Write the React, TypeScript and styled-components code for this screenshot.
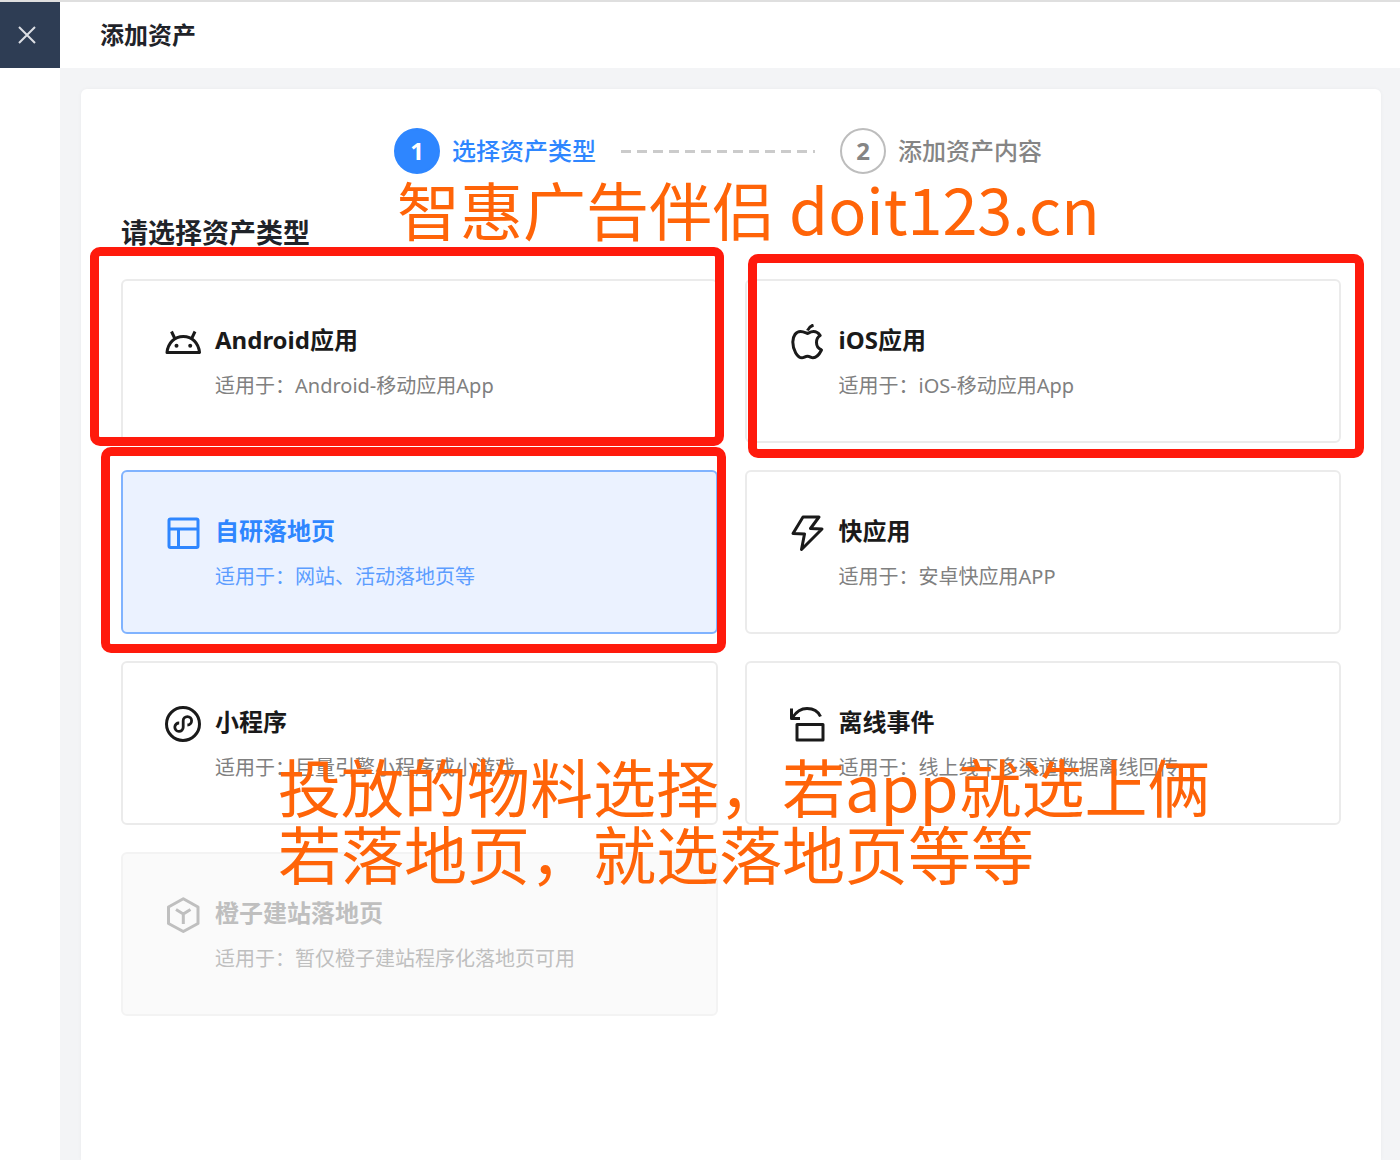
import React from "react";
import styled, { createGlobalStyle, css } from "styled-components";

const GlobalStyle = createGlobalStyle`
  * { box-sizing: border-box; }
  body {
    margin: 0;
    background: #f3f4f6;
    color: #1f2329;
    font-family: "Noto Sans", "Noto Sans CJK SC", sans-serif;
  }
  button { font: inherit; color: inherit; }
`;

const Page = styled.div`
  display: flex;
  min-height: 100vh;
  border-top: 2px solid #dfdfdf;
`;

const Rail = styled.aside`
  flex: none;
  width: 60px;
  background: #fff;
`;

const CloseButton = styled.button`
  display: flex;
  align-items: center;
  justify-content: center;
  width: 60px;
  height: 66px;
  padding: 0 6px 0 0;
  border: 0;
  background: #2e3d54;
  color: #dcdfe4;
`;

const Main = styled.main`
  flex: 1;
  min-width: 0;
  display: flex;
  flex-direction: column;
`;

const Header = styled.header`
  display: flex;
  align-items: center;
  height: 66px;
  padding: 0 40px;
  background: #fff;
`;

const PageTitle = styled.h1`
  margin: 0;
  font-size: 24px;
  line-height: 32px;
  font-weight: 700;
`;

const Panel = styled.section`
  position: relative;
  flex: 1;
  margin: 21px 19px 0 21px;
  padding: 39px 40px 80px;
  border-radius: 6px 6px 0 0;
  background: #fff;
  box-shadow: 0 0 4px rgba(0, 0, 0, 0.04);
`;

const Steps = styled.ol`
  display: flex;
  align-items: center;
  justify-content: center;
  margin: 0;
  padding: 0 26px 0 0;
  list-style: none;
`;

const Step = styled.li<{ $active?: boolean }>`
  display: flex;
  align-items: center;
  gap: 12px;
  font-size: 24px;
  line-height: 32px;
  font-weight: 500;
  color: ${(p) => (p.$active ? "#2e86ff" : "#858585")};
`;

const StepNumber = styled.span<{ $active?: boolean }>`
  display: flex;
  align-items: center;
  justify-content: center;
  width: 46px;
  height: 46px;
  border-radius: 50%;
  border: 2px solid ${(p) => (p.$active ? "#2e86ff" : "#bdbdbd")};
  background: ${(p) => (p.$active ? "#2e86ff" : "#fff")};
  color: ${(p) => (p.$active ? "#fff" : "#858585")};
  font-weight: 700;
`;

const StepLine = styled.li`
  width: 194px;
  height: 3px;
  margin: 0 25px;
  background: repeating-linear-gradient(90deg, #cbcbcb 0 10px, transparent 10px 16px);
`;

const SectionTitle = styled.h2`
  margin: 41px 0 28px;
  font-size: 27px;
  line-height: 36px;
  font-weight: 700;
`;

const CardGrid = styled.div`
  display: grid;
  grid-template-columns: 1fr 1fr;
  gap: 27px;
`;

const Card = styled.button<{ $selected?: boolean }>`
  position: relative;
  display: flex;
  align-items: flex-start;
  gap: 14px;
  min-height: 164px;
  padding: 43px 42px 41px;
  border: 2px solid #ebebeb;
  border-radius: 6px;
  background: #fff;
  color: #1a1a1a;
  text-align: left;

  ${(p) =>
    p.$selected &&
    css`
      border-color: #80b3ff;
      background: #ebf2ff;
      color: #2e86ff;
    `}

  &:disabled {
    border-color: #f3f3f3;
    background: #fafafa;
    color: #bfbfbf;
  }
`;

const CardText = styled.span`
  display: flex;
  flex-direction: column;
  gap: 16px;
`;

const CardTitle = styled.strong`
  font-size: 24px;
  line-height: 32px;
  font-weight: 700;
`;

const CardDesc = styled.span<{ $tone: string }>`
  font-size: 20px;
  line-height: 28px;
  color: ${(p) => p.$tone};
`;

const IconSvg = styled.svg`
  flex: none;
  width: 36px;
  height: 36px;
  fill: none;
  stroke: currentColor;
  stroke-width: 3;
  stroke-linejoin: round;
`;

const Mark = styled.span<{ $inset: string }>`
  position: absolute;
  inset: ${(p) => p.$inset};
  z-index: 1;
  border: 9px solid #ff1a0c;
  border-radius: 10px;
  pointer-events: none;
`;

const Note = styled.p<{ $top: number; $left: number }>`
  position: absolute;
  top: ${(p) => p.$top}px;
  left: ${(p) => p.$left}px;
  z-index: 2;
  margin: 0;
  font-family: "Noto Sans CJK SC", sans-serif;
  font-size: 63px;
  line-height: 67px;
  color: #ff6408;
  white-space: nowrap;
  pointer-events: none;
`;

const icons = {
  android: (
    <>
      <path d="M2 28.5C3 19 9.5 12.5 18.3 12.5S33.5 19 34.5 28.5Z" />
      <path d="M6.5 7.5L9.8 14.5M30 7.5L26.7 14.5" />
      <circle cx="11.5" cy="21.8" r="2" fill="currentColor" stroke="none" />
      <circle cx="25.2" cy="21.8" r="2" fill="currentColor" stroke="none" />
    </>
  ),
  apple: (
    <>
      <path d="M18.5 9.5C16 8.5 14.5 7.5 11.5 7.5C7 7.5 3.8 12 3.8 18C3.8 26 8.5 33.8 13 33.8C15 33.8 16 32.3 18.5 32.3S22 33.8 24 33.8C27.5 33.8 30.5 30 32.5 26C29 24.5 27.5 22 27.5 18.5C27.5 15.5 28.5 13 31.2 11.5C29.5 9 27 7.5 24.500 7.500C22 7.500 20.500 8.500 18.500 9.500Z" />
      <path d="M18.500 6.500C19.500 4 21.500 2 24.500 1" />
    </>
  ),
  layout: (
    <>
      <rect x="4" y="4" width="29" height="28.5" rx="1.5" />
      <path d="M4 14H33M13.5 14V32" />
    </>
  ),
  bolt: <path d="M14 2H30L21.5 13.5L33 14L12.5 34.5L15.5 19L4 18.5Z" />,
  mini: (
    <>
      <circle cx="18" cy="18" r="16.5" />
      <path
        strokeWidth="2.8"
        d="M14.2 17A4.2 4.2 0 1 0 18.2 21.2V14.8A4.2 4.2 0 1 1 22.4 19"
      />
    </>
  ),
  offline: (
    <>
      <path d="M8 18.5H34V34H8Z" />
      <path d="M2.5 2.5V12.5H11M3.5 11.5C8 4.5 13 2.5 18 2.5C24 2.5 29 5 31.5 10.5" />
    </>
  ),
  hexagon: (
    <path d="M18.3 1.8L33 10V26.5L18.3 34.5L3.5 26.5V10ZM11 12.5L18.3 17L25.5 12.5M18.3 17V27" />
  ),
};

type Asset = {
  title: string;
  desc: string;
  icon: keyof typeof icons;
  tone?: string;
  selected?: boolean;
  disabled?: boolean;
  mark?: string;
};

const assets: Asset[] = [
  { title: "Android应用", desc: "Android-移动应用App", icon: "android", mark: "-34px -8px -5px -33px" },
  { title: "iOS应用", desc: "iOS-移动应用App", icon: "apple", mark: "-27px -25px -17px 1px" },
  { title: "自研落地页", desc: "网站、活动落地页等", icon: "layout", tone: "#5c9dff", selected: true, mark: "-25px -10px -21px -22px" },
  { title: "快应用", desc: "安卓快应用APP", icon: "bolt" },
  { title: "小程序", desc: "巨量引擎小程序或小游戏", icon: "mini" },
  { title: "离线事件", desc: "线上线下多渠道数据离线回传", icon: "offline" },
  { title: "橙子建站落地页", desc: "暂仅橙子建站程序化落地页可用", icon: "hexagon", tone: "#bfbfbf", disabled: true },
];

export default function App() {
  return (
    <>
      <GlobalStyle />
      <Page lang="zh-CN">
        <Rail>
          <CloseButton type="button" aria-label="关闭">
            <svg width="18" height="18" viewBox="0 0 18 18" stroke="currentColor" strokeWidth="2">
              <path d="M1 1L17 17M17 1L1 17" />
            </svg>
          </CloseButton>
        </Rail>
        <Main>
          <Header>
            <PageTitle>添加资产</PageTitle>
          </Header>
          <Panel>
            <Steps>
              <Step $active aria-current="step">
                <StepNumber $active>1</StepNumber>
                选择资产类型
              </Step>
              <StepLine aria-hidden="true" />
              <Step>
                <StepNumber>2</StepNumber>
                添加资产内容
              </Step>
            </Steps>
            <SectionTitle>请选择资产类型</SectionTitle>
            <CardGrid>
              {assets.map((a) => (
                <Card
                  key={a.title}
                  type="button"
                  $selected={a.selected}
                  aria-pressed={Boolean(a.selected)}
                  disabled={a.disabled}
                >
                  <IconSvg viewBox="0 0 36 36" aria-hidden="true">
                    {icons[a.icon]}
                  </IconSvg>
                  <CardText>
                    <CardTitle>{a.title}</CardTitle>
                    <CardDesc $tone={a.tone ?? "#808080"}>适用于：{a.desc}</CardDesc>
                  </CardText>
                  {a.mark && <Mark $inset={a.mark} />}
                </Card>
              ))}
            </CardGrid>
            <Note $top={85} $left={316}>
              智惠广告伴侣 doit123.cn
            </Note>
            <Note $top={662} $left={197}>
              投放的物料选择，若app就选上俩
              <br />
              若落地页，就选落地页等等
            </Note>
          </Panel>
        </Main>
      </Page>
    </>
  );
}
